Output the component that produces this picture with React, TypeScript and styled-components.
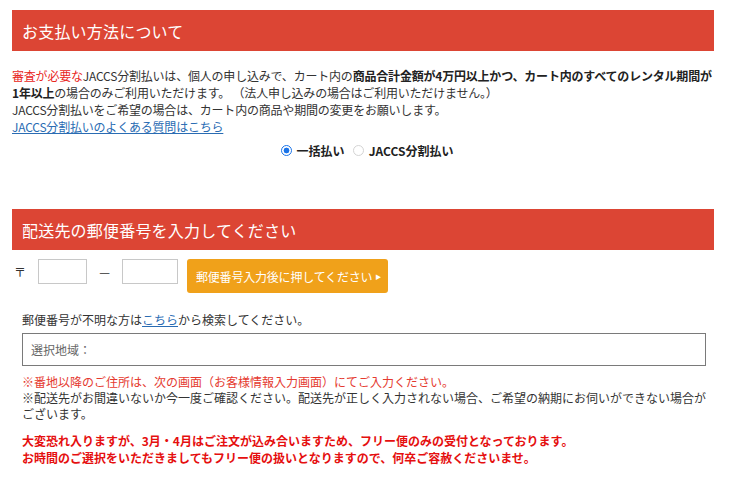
import React from 'react';
import styled, { createGlobalStyle } from 'styled-components';

const GlobalStyle = createGlobalStyle`
  body {
    margin: 0;
    background: #fff;
    font-family: "Noto Sans CJK JP", "Noto Sans", sans-serif;
    color: #333;
  }
`;

const Page = styled.main`
  width: 702px;
  padding: 10px 0 0 12px;
`;

const Section = styled.section<{ $gap?: number }>`
  margin-top: ${(p) => p.$gap ?? 0}px;
`;

const Heading = styled.h2`
  margin: 0;
  height: 41px;
  padding: 0 10px;
  display: flex;
  align-items: center;
  background: #dc4534;
  color: #fff;
  font-size: 16px;
  font-weight: normal;
  letter-spacing: 0.2px;
`;

const Notice = styled.p`
  margin: 16px 0 0;
  font-size: 12px;
  line-height: 17px;
  letter-spacing: -0.2px;
  white-space: nowrap;
`;

const Alert = styled.span`
  color: #e8261c;
`;

const Strong = styled.strong`
  font-weight: bold;
  color: #222;
`;

const Link = styled.a`
  color: #2a6cb3;
  text-decoration: underline;
`;

const RadioRow = styled.div`
  margin-top: 7px;
  display: flex;
  justify-content: center;
  align-items: center;
  gap: 8px;
  padding-left: 8px;
  font-size: 12px;
  line-height: 17px;
  font-weight: bold;
  color: #222;
`;

const RadioLabel = styled.label`
  display: flex;
  align-items: center;
  gap: 5px;
`;

const Radio = styled.input`
  appearance: none;
  box-sizing: border-box;
  margin: 0;
  width: 11px;
  height: 11px;
  border-radius: 50%;
  border: 1px solid #d4d4d4;
  background: #fff;

  &:checked {
    border-color: #1a73e8;
    background: radial-gradient(circle, #1a73e8 0 2.6px, #fff 3.2px);
  }
`;

const PostalRow = styled.div`
  margin-top: 9px;
  display: flex;
  align-items: flex-start;
  font-size: 12px;
`;

const PostalMark = styled.span`
  width: 24px;
  padding-left: 2px;
  line-height: 25px;
  color: #333;
`;

const Dash = styled.span`
  width: 35px;
  text-align: center;
  line-height: 25px;
  color: #333;
`;

const ZipInput = styled.input<{ $w: number }>`
  box-sizing: border-box;
  width: ${(p) => p.$w}px;
  height: 25px;
  margin: 0;
  border: 1px solid #c8c8c8;
  padding: 2px 4px;
`;

const SearchButton = styled.button`
  margin-left: 9px;
  height: 34px;
  padding: 0 7px 0 9px;
  border: none;
  border-radius: 3px;
  background: #f0a11a;
  color: #fff;
  font-family: inherit;
  font-size: 12px;
  letter-spacing: -0.2px;
  display: flex;
  align-items: center;
  gap: 3px;
`;

const Arrow = styled.span`
  font-size: 6px;
`;

const Body = styled.div`
  padding: 0 8px 0 10px;
  font-size: 12px;
`;

const Hint = styled.p`
  margin: 18px 0 0;
  line-height: 17px;
`;

const AreaBox = styled.div`
  box-sizing: border-box;
  margin-top: 5px;
  height: 33px;
  border: 1px solid #7a7a7a;
  padding: 0 8px;
  display: flex;
  align-items: center;
  color: #666;
`;

const Notes = styled.p`
  margin: 8px 0 0;
  line-height: 16px;
`;

const RedNote = styled.span`
  color: #e53a2f;
`;

const Warning = styled.p`
  margin: 10px 0 0;
  line-height: 17px;
  font-weight: bold;
  color: #e50f0f;
`;

export default function App() {
  return (
    <>
      <GlobalStyle />
      <Page>
        <Section>
          <Heading>お支払い方法について</Heading>
          <Notice>
            <Alert>審査が必要な</Alert>JACCS分割払いは、個人の申し込みで、カート内の
            <Strong>商品合計金額が4万円以上かつ、カート内のすべてのレンタル期間が</Strong>
            <br />
            <Strong>1年以上</Strong>の場合のみご利用いただけます。 （法人申し込みの場合はご利用いただけません。）
            <br />
            JACCS分割払いをご希望の場合は、カート内の商品や期間の変更をお願いします。
            <br />
            <Link href="#">JACCS分割払いのよくある質問はこちら</Link>
          </Notice>
          <RadioRow>
            <RadioLabel>
              <Radio type="radio" name="pay" defaultChecked />
              一括払い
            </RadioLabel>
            <RadioLabel>
              <Radio type="radio" name="pay" />
              JACCS分割払い
            </RadioLabel>
          </RadioRow>
        </Section>

        <Section $gap={50}>
          <Heading>配送先の郵便番号を入力してください</Heading>
          <PostalRow>
            <PostalMark>〒</PostalMark>
            <ZipInput $w={49} />
            <Dash>—</Dash>
            <ZipInput $w={56} />
            <SearchButton>
              郵便番号入力後に押してください<Arrow>▶</Arrow>
            </SearchButton>
          </PostalRow>
          <Body>
            <Hint>
              郵便番号が不明な方は<Link href="#">こちら</Link>から検索してください。
            </Hint>
            <AreaBox>選択地域：</AreaBox>
            <Notes>
              <RedNote>※番地以降のご住所は、次の画面（お客様情報入力画面）にてご入力ください。</RedNote>
              <br />
              ※配送先がお間違いないか今一度ご確認ください。配送先が正しく入力されない場合、ご希望の納期にお伺いができない場合がございます。
            </Notes>
            <Warning>
              大変恐れ入りますが、3月・4月はご注文が込み合いますため、フリー便のみの受付となっております。
              <br />
              お時間のご選択をいただきましてもフリー便の扱いとなりますので、何卒ご容赦くださいませ。
            </Warning>
          </Body>
        </Section>
      </Page>
    </>
  );
}
